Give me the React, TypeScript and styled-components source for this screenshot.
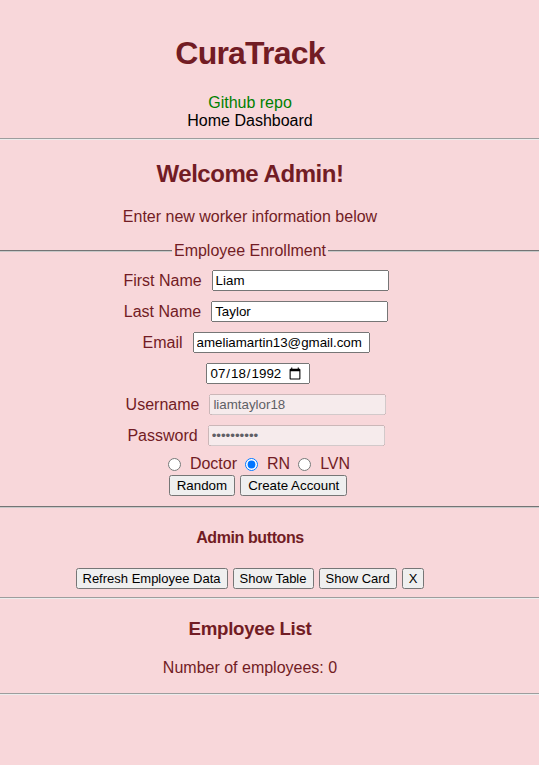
import * as React from 'react'
import styled, { createGlobalStyle } from 'styled-components'

const GlobalStyle = createGlobalStyle`
	body {
		margin: 0;
		background-color: #f8d7da;
		color: #721c24;
		font-family: 'Liberation Sans', Arial, sans-serif;
		font-size: 16px;
	}
`

// content column sits slightly left of the window centre, rules run full width
const Page = styled.div`
	text-align: center;
	display: flow-root;
	padding-right: 39px;
`

const Header = styled.header`
	padding-top: 14px;
`

const Title = styled.h1`
	font-size: 32px;
	margin: 21.44px 0;
	line-height: 37px;
	letter-spacing: -0.8px;
`

const Nav = styled.nav`
	display: flex;
	flex-direction: column;
	align-items: center;
	line-height: 18px;
`

const RepoLink = styled.a`
	color: #008000;
	text-decoration: none;
`

const NavLink = styled.a`
	color: #000;
	text-decoration: none;
`

const Rule = styled.hr`
	margin: 8px -39px 8px 0;
	border: none;
	border-top: 1px solid #9d9d9d;
	border-bottom: 1px solid #ececec;
	height: 0;
`

const Heading = styled.h2`
	font-size: 24px;
	line-height: 28px;
	margin: 19.92px 0;
	letter-spacing: -0.45px;
`

const SubHeading = styled.h3`
	font-size: 18.72px;
	line-height: 21.5px;
	margin: 19.5px 0 18.72px;
	letter-spacing: -0.3px;
`

const SmallHeading = styled.h4`
	font-size: 16px;
	line-height: 18px;
	margin: 20.5px 0 21px;
	letter-spacing: -0.4px;
`

const Text = styled.p`
	margin: 16px 0;
	line-height: 18px;
`

const Enrollment = styled.fieldset`
	margin: 0 -39px 0 0;
	padding: 5.6px 39px 10px 0;
	border: none;
	border-top: 2px groove #c8c8c8;
	border-bottom: 2px groove #c8c8c8;
`

const Legend = styled.legend`
	padding: 0 2px;
	margin: 0 auto;
	line-height: 18px;
`

const Row = styled.div`
	display: flex;
	justify-content: center;
	align-items: center;
	gap: 10px;
	padding: 5px 0 5px 12px;
	line-height: 18px;
`

const Field = styled.input`
	font-family: 'Liberation Sans', Arial, sans-serif;
	font-size: 13.33px;
	color: #000;
	width: 169px;
	height: 15px;
	padding: 1px 2px;
	margin: 0;

	&:disabled {
		color: #5f5f66;
	}
`

const DateField = styled(Field)`
	box-sizing: border-box;
	width: 104px;
	height: 21px;
	padding: 1px 4px 1px 2px;
	margin-left: 3px;
`

const RoleRow = styled.div`
	display: flex;
	justify-content: center;
	align-items: center;
	height: 24px;
	padding: 2px 0 0 16px;
	box-sizing: border-box;
	line-height: 18px;
`

const Radio = styled.input`
	margin: 1px 9px 0 5px;
`

const RoleLabel = styled.label`
	margin-right: 3px;
`

const ButtonRow = styled.div<{ $shift?: number }>`
	display: flex;
	justify-content: center;
	gap: 5px;
	padding-left: ${p => p.$shift ?? 0}px;
`

const Button = styled.button<{ $small?: boolean }>`
	font-family: 'Liberation Sans', Arial, sans-serif;
	font-size: ${p => (p.$small ? 13 : 13.33)}px;
	color: #000;
	margin: 0;
	padding: ${p => (p.$small ? '1px 5px' : '1px 6px')};
	height: 21px;
`

export default function App() {
	return (
		<Page>
			<GlobalStyle />
			<Header>
				<Title>CuraTrack</Title>
				<Nav>
					<RepoLink href="#">Github repo</RepoLink>
					<NavLink href="#">Home Dashboard</NavLink>
				</Nav>
			</Header>
			<Rule />
			<Heading>Welcome Admin!</Heading>
			<Text>Enter new worker information below</Text>
			<Enrollment>
				<Legend>Employee Enrollment</Legend>
				<Row>
					<label>First Name</label>
					<Field type="text" defaultValue="Liam" />
				</Row>
				<Row>
					<label>Last Name</label>
					<Field type="text" defaultValue="Taylor" />
				</Row>
				<Row>
					<label>Email</label>
					<Field type="email" defaultValue="ameliamartin13@gmail.com" />
				</Row>
				<Row>
					<DateField type="date" defaultValue="1992-07-18" />
				</Row>
				<Row>
					<label>Username</label>
					<Field type="text" defaultValue="liamtaylor18" disabled />
				</Row>
				<Row>
					<label>Password</label>
					<Field type="password" defaultValue="liamtaylor" disabled />
				</Row>
				<RoleRow>
					<Radio type="radio" name="role" />
					<RoleLabel>Doctor</RoleLabel>
					<Radio type="radio" name="role" defaultChecked />
					<RoleLabel>RN</RoleLabel>
					<Radio type="radio" name="role" />
					<RoleLabel>LVN</RoleLabel>
				</RoleRow>
				<ButtonRow $shift={16}>
					<Button>Random</Button>
					<Button>Create Account</Button>
				</ButtonRow>
			</Enrollment>
			<SmallHeading>Admin buttons</SmallHeading>
			<ButtonRow>
				<Button $small>Refresh Employee Data</Button>
				<Button $small>Show Table</Button>
				<Button $small>Show Card</Button>
				<Button $small>X</Button>
			</ButtonRow>
			<Rule />
			<SubHeading>Employee List</SubHeading>
			<Text>Number of employees: 0</Text>
			<Rule />
		</Page>
	)
}
